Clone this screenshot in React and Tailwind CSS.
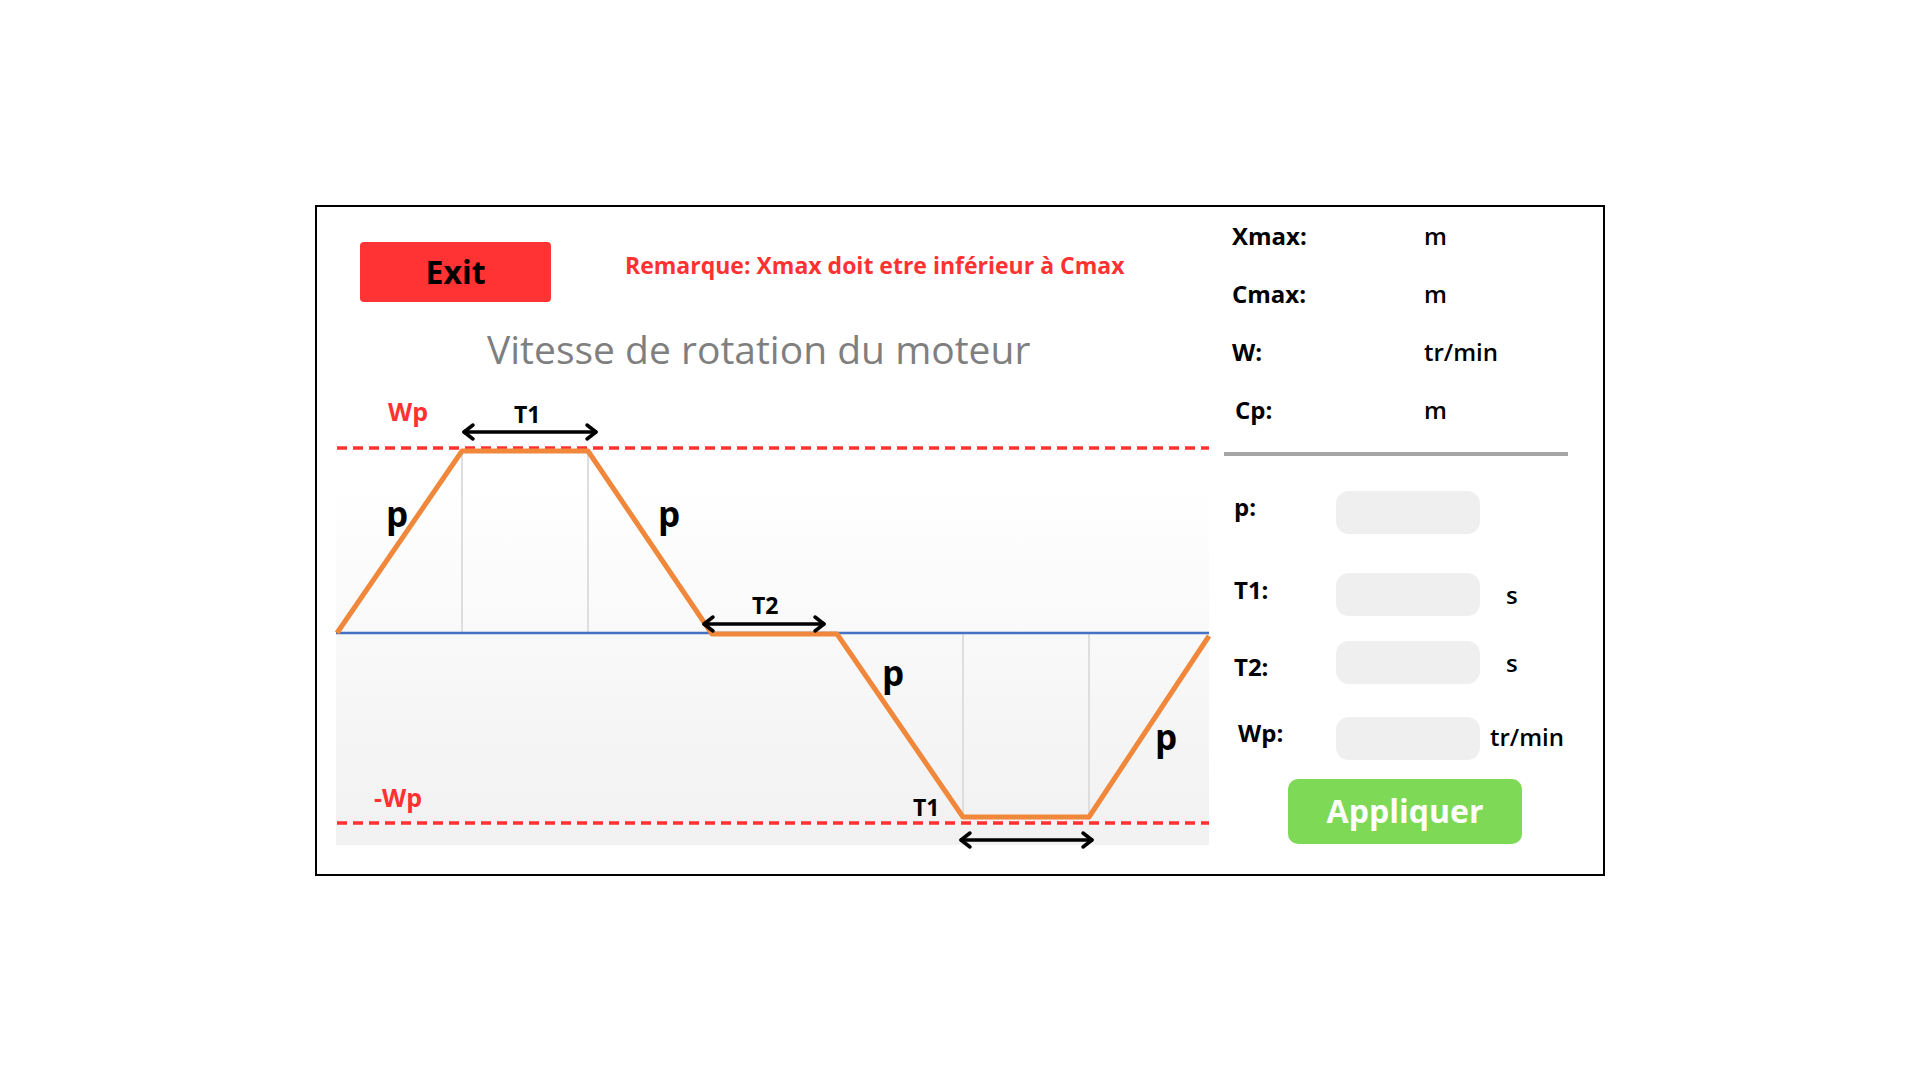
import React from 'react'

const RED = '#ff3131'
const ORANGE = '#f0873a'

function Arrow({ x1, x2, y }) {
  return (
    <g stroke="#000" strokeWidth="3.5" fill="none" strokeLinecap="round" strokeLinejoin="round">
      <line x1={x1} y1={y} x2={x2} y2={y} />
      <polyline points={`${x1 + 9},${y - 7} ${x1},${y} ${x1 + 9},${y + 7}`} />
      <polyline points={`${x2 - 9},${y - 7} ${x2},${y} ${x2 - 9},${y + 7}`} />
    </g>
  )
}

function Chart() {
  return (
    <div className="relative ml-[19px] mt-[18px] w-[873px] h-[460px]">
      <svg width="873" height="460" viewBox="0 0 873 460" className="overflow-visible">
        <defs>
          <linearGradient id="bg" x1="0" y1="0" x2="0" y2="1">
            <stop offset="0" stopColor="#ffffff" />
            <stop offset="1" stopColor="#f1f1f1" />
          </linearGradient>
        </defs>
        <rect x="0" y="90" width="873" height="365" fill="url(#bg)" />

        {/* grid lines under the plateaus */}
        <g stroke="#dedede" strokeWidth="2">
          <line x1="126" y1="61" x2="126" y2="243" />
          <line x1="252" y1="61" x2="252" y2="243" />
          <line x1="627" y1="244" x2="627" y2="427" />
          <line x1="753" y1="244" x2="753" y2="427" />
        </g>

        <line x1="0" y1="243" x2="873" y2="243" stroke="#4472c4" strokeWidth="2.5" />

        <g stroke={RED} strokeWidth="3.5" strokeDasharray="10 6">
          <line x1="1" y1="58" x2="873" y2="58" />
          <line x1="1" y1="433" x2="873" y2="433" />
        </g>

        <polyline
          points="1,243 126,61 252,61 376,244 501,244 627,427 753,427 873,246"
          fill="none"
          stroke={ORANGE}
          strokeWidth="5"
          strokeLinejoin="round"
        />

        <Arrow x1={128} x2={260} y={42} />
        <Arrow x1={368} x2={488} y={234} />
        <Arrow x1={625} x2={756} y={450} />

        <g fontFamily="'Open Sans', sans-serif" fontWeight="700">
          <text x="52" y="31" fontSize="25" fill={RED}>Wp</text>
          <text x="38" y="417" fontSize="25" fill={RED}>-Wp</text>
          <text x="178" y="33" fontSize="23" fill="#000">T1</text>
          <text x="416" y="224" fontSize="23" fill="#000">T2</text>
          <text x="577" y="426" fontSize="23" fill="#000">T1</text>
          <text x="50" y="137" fontSize="35" fill="#000">p</text>
          <text x="322" y="137" fontSize="35" fill="#000">p</text>
          <text x="546" y="296" fontSize="35" fill="#000">p</text>
          <text x="819" y="360" fontSize="35" fill="#000">p</text>
        </g>
      </svg>
    </div>
  )
}

const readings = [
  { label: 'Xmax:', unit: 'm', pad: '' },
  { label: 'Cmax:', unit: 'm', pad: '' },
  { label: 'W:', unit: 'tr/min', pad: '' },
  { label: 'Cp:', unit: 'm', pad: 'pl-[3px]' },
]

export default function App() {
  return (
    <div className="min-h-screen bg-white flex items-center justify-center font-['Open_Sans',sans-serif]">
      <div className="w-[1290px] h-[671px] border-2 border-black flex">
        {/* left: header + chart */}
        <div className="w-[900px] flex flex-col">
          <div className="flex items-start pt-[35px] pl-[43px]">
            <button
              type="button"
              className="w-[191px] h-[60px] rounded-[4px] bg-[#ff3333] flex items-center justify-center text-[32px] leading-none font-bold text-black"
            >
              Exit
            </button>
            <p className="ml-[74px] mt-[9px] text-[23px] leading-[28px] font-bold text-[#ff3131]">
              Remarque: Xmax doit etre inférieur à Cmax
            </p>
          </div>

          <h1 className="pl-[170px] mt-[24px] text-[39px] leading-[46px] font-normal text-[#7f7f7f]">
            Vitesse de rotation du moteur
          </h1>

          <Chart />
        </div>

        {/* right: values and parameters */}
        <div className="flex-1 flex flex-col">
          <div className="pl-[15px] pt-[13px]">
            {readings.map(r => (
              <div key={r.label} className="flex items-start h-[58px] text-[24px] leading-[32px] text-black">
                <span className={`w-[192px] font-bold ${r.pad}`}>{r.label}</span>
                <span className="font-semibold">{r.unit}</span>
              </div>
            ))}
          </div>

          <div className="ml-[7px] w-[344px] h-[4px] bg-[#a6a6a6]" />

          <div className="pl-[17px] flex flex-col text-[24px] leading-[32px] text-black">
            <div className="flex items-start mt-[35px]">
              <span className="w-[102px] font-bold">p:</span>
              <input className="w-[144px] h-[43px] rounded-[13px] bg-[#efefef] outline-none px-3" />
            </div>
            <div className="flex items-start mt-[39px]">
              <span className="w-[102px] mt-[1px] font-bold">T1:</span>
              <input className="w-[144px] h-[43px] rounded-[13px] bg-[#efefef] outline-none px-3" />
              <span className="ml-[26px] mt-[6px] font-semibold">s</span>
            </div>
            <div className="flex items-start mt-[25px]">
              <span className="w-[102px] mt-[10px] font-bold">T2:</span>
              <input className="w-[144px] h-[43px] rounded-[13px] bg-[#efefef] outline-none px-3" />
              <span className="ml-[26px] mt-[6px] font-semibold">s</span>
            </div>
            <div className="flex items-start mt-[33px]">
              <span className="w-[102px] pl-[4px] font-bold">Wp:</span>
              <input className="w-[144px] h-[43px] rounded-[13px] bg-[#efefef] outline-none px-3" />
              <span className="ml-[10px] mt-[4px] font-semibold">tr/min</span>
            </div>

            <button
              type="button"
              className="mt-[19px] ml-[54px] w-[234px] h-[65px] rounded-[10px] bg-[#7ed957] flex items-center justify-center text-[32px] leading-none font-bold text-white"
            >
              Appliquer
            </button>
          </div>
        </div>
      </div>
    </div>
  )
}
